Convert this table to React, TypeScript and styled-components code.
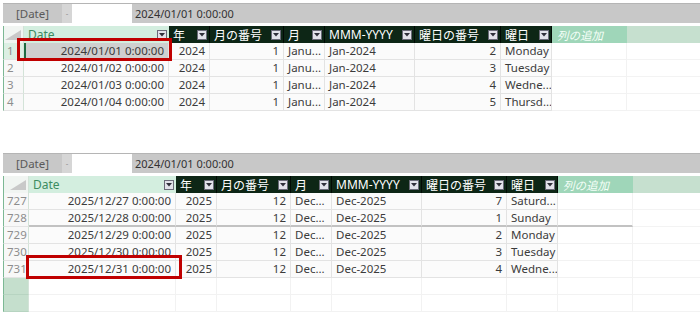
import React from "react";
import styled, { createGlobalStyle, css } from "styled-components";

const Global = createGlobalStyle`
  html, body { margin: 0; padding: 0; background: #ffffff; }
  body { font-family: "Noto Sans", "Noto Sans CJK JP", sans-serif; }
`;

const Page = styled.div`
  width: 700px;
  height: 313px;
  overflow: hidden;
  padding: 3px 0 0 3px;
  box-sizing: border-box;
  display: flex;
  flex-direction: column;
  gap: 42px;
`;

const Panel = styled.div`
  position: relative;
  display: flex;
  flex-direction: column;
  gap: 3px;
`;

const FormulaBar = styled.div`
  display: flex;
  height: 19px;
  border-top: 1px solid #b5b5b5;
  background: #c8c8c8;
  font-size: 11px;
  color: #3a3a3a;
`;

const NameBox = styled.div`
  width: 59px;
  display: flex;
  align-items: center;
  justify-content: center;
  color: #5a5a5a;
  font-size: 11.5px;
`;

const Dash = styled.div`
  width: 10px;
  background: #d6d6d6;
  color: #9a9a9a;
  font-size: 8px;
  display: flex;
  align-items: center;
  justify-content: center;
`;

const InputBox = styled.div`
  width: 60px;
  background: #ffffff;
`;

const FormulaValue = styled.div`
  flex: 1;
  display: flex;
  align-items: center;
  padding-left: 3px;
  font-size: 11px;
  color: #333;
`;

const Table = styled.div`
  display: flex;
  flex-direction: column;
`;

const Row = styled.div<{ $cols: string }>`
  display: grid;
  grid-template-columns: ${(p) => p.$cols};
  height: 17px;
`;

const RowHead = styled.div<{ $active?: boolean; $empty?: boolean }>`
  box-sizing: border-box;
  border-left: 1px solid #7cb894;
  border-right: 1px solid #d3e3d8;
  border-bottom: 1px solid ${(p) => (p.$empty ? "#b7d4c1" : "#e4e4e4")};
  background: ${(p) => (p.$empty ? "#c5dfcd" : p.$active ? "#dcefe3" : "#f8f8f8")};
  color: #8d8d8d;
  font-size: 11.5px;
  line-height: 16px;
  padding-left: 3px;
`;

const Corner = styled.div`
  box-sizing: border-box;
  border-left: 1px solid #7cb894;
  border-right: 1px solid #d3e3d8;
  background: #f1f5f2;
  display: flex;
  align-items: flex-end;
  justify-content: flex-end;
  padding: 0 2px 3px 0;
`;

const HeadCell = styled.div<{ $kind: "light" | "dark" }>`
  box-sizing: border-box;
  display: flex;
  align-items: center;
  justify-content: space-between;
  padding: 0 2px 0 4px;
  font-size: 12px;
  white-space: nowrap;
  overflow: hidden;
  ${(p) =>
    p.$kind === "light"
      ? css`
          background: #d3eedf;
          color: #3d8c5f;
        `
      : css`
          background: #0d2616;
          color: #ffffff;
          border-right: 1px solid #020a05;
        `}
`;

const AddColumn = styled.div`
  background: #9fd6b9;
  color: #f4fff8;
  font-style: italic;
  font-size: 11.5px;
  display: flex;
  align-items: center;
  padding-left: 5px;
`;

const HeadTail = styled.div`
  background: #c6e0cf;
`;

const DropButton = styled.span`
  width: 10px;
  height: 10px;
  box-sizing: border-box;
  flex: none;
  background: #e2e2ea;
  border: 1px solid #6a6a78;
  display: flex;
  align-items: center;
  justify-content: center;
`;

const Cell = styled.div<{ $align?: "left" | "right"; $selected?: boolean; $sep?: boolean; $blank?: boolean }>`
  box-sizing: border-box;
  font-size: 11.5px;
  line-height: 16px;
  color: #3b3b3b;
  white-space: nowrap;
  overflow: hidden;
  text-align: ${(p) => p.$align ?? "left"};
  padding: 0 4px;
  background: ${(p) => (p.$selected ? "#cfcfcf" : p.$blank ? "#ffffff" : "#fbfbfb")};
  border-right: 1px solid ${(p) => (p.$blank ? "#f2f2f2" : "#e3e3e3")};
  border-bottom: ${(p) => (p.$sep ? "2px solid #c2c2c2" : p.$blank ? "1px solid #f2f2f2" : "1px solid #e3e3e3")};
  ${(p) =>
    p.$selected &&
    css`
      border-left: 2px solid #1f6b41;
    `}
`;

const Tail = styled.div`
  border-bottom: 1px solid #f3f3f3;
  background: #ffffff;
`;

const Highlight = styled.div<{ $top: number; $left: number; $w: number; $h: number }>`
  position: absolute;
  top: ${(p) => p.$top}px;
  left: ${(p) => p.$left}px;
  width: ${(p) => p.$w}px;
  height: ${(p) => p.$h}px;
  box-sizing: border-box;
  border: 3px solid #c00000;
  pointer-events: none;
`;

const Drop = () => (
  <DropButton>
    <svg width="6" height="4" viewBox="0 0 6 4">
      <polygon points="0,0 6,0 3,3.5" fill="#2f2f3a" />
    </svg>
  </DropButton>
);

type RowData = {
  n: string;
  date: string;
  y: string;
  m: string;
  mn: string;
  my: string;
  wd: string;
  wn: string;
};

const headers = ["年", "月の番号", "月", "MMM-YYYY", "曜日の番号", "曜日"];

type PanelProps = {
  cols: string;
  rows: RowData[];
  selectedFirst?: boolean;
  sepAfter?: number;
  emptyRows?: number;
  box: { top: number; left: number; w: number; h: number };
};

const GridPanel: React.FC<PanelProps> = ({ cols, rows, selectedFirst, sepAfter, emptyRows = 0, box }) => (
  <Panel>
    <FormulaBar>
      <NameBox>[Date]</NameBox>
      <Dash>-</Dash>
      <InputBox />
      <FormulaValue>2024/01/01 0:00:00</FormulaValue>
    </FormulaBar>
    <Table>
      <Row $cols={cols}>
        <Corner>
          <svg width="16" height="10" viewBox="0 0 16 10">
            <polygon points="16,0 16,10 0,10" fill="#c9c9c9" />
          </svg>
        </Corner>
        <HeadCell $kind="light">
          Date
          <Drop />
        </HeadCell>
        {headers.map((h) => (
          <HeadCell key={h} $kind="dark">
            {h}
            <Drop />
          </HeadCell>
        ))}
        <AddColumn>列の追加</AddColumn>
        <HeadTail />
      </Row>
      {rows.map((r, i) => {
        const sep = sepAfter === i;
        const sel = selectedFirst && i === 0;
        return (
          <Row key={r.n} $cols={cols}>
            <RowHead $active={sel}>{r.n}</RowHead>
            <Cell $align="right" $selected={sel} $sep={sep}>
              {r.date}
            </Cell>
            <Cell $align="right" $sep={sep}>
              {r.y}
            </Cell>
            <Cell $align="right" $sep={sep}>
              {r.m}
            </Cell>
            <Cell $sep={sep}>{r.mn}</Cell>
            <Cell $sep={sep}>{r.my}</Cell>
            <Cell $align="right" $sep={sep}>
              {r.wd}
            </Cell>
            <Cell $sep={sep}>{r.wn}</Cell>
            <Cell $blank $sep={sep} />
            <Tail />
          </Row>
        );
      })}
      {Array.from({ length: emptyRows }).map((_, i) => (
        <Row key={"e" + i} $cols={cols}>
          <RowHead $empty />
          <Cell $blank />
          <Cell $blank />
          <Cell $blank />
          <Cell $blank />
          <Cell $blank />
          <Cell $blank />
          <Cell $blank />
          <Cell $blank />
          <Tail />
        </Row>
      ))}
    </Table>
    <Highlight $top={box.top} $left={box.left} $w={box.w} $h={box.h} />
  </Panel>
);

const topRows: RowData[] = [
  { n: "1", date: "2024/01/01 0:00:00", y: "2024", m: "1", mn: "Janu...", my: "Jan-2024", wd: "2", wn: "Monday" },
  { n: "2", date: "2024/01/02 0:00:00", y: "2024", m: "1", mn: "Janu...", my: "Jan-2024", wd: "3", wn: "Tuesday" },
  { n: "3", date: "2024/01/03 0:00:00", y: "2024", m: "1", mn: "Janu...", my: "Jan-2024", wd: "4", wn: "Wedne..." },
  { n: "4", date: "2024/01/04 0:00:00", y: "2024", m: "1", mn: "Janu...", my: "Jan-2024", wd: "5", wn: "Thursd..." },
];

const bottomRows: RowData[] = [
  { n: "727", date: "2025/12/27 0:00:00", y: "2025", m: "12", mn: "Dec...", my: "Dec-2025", wd: "7", wn: "Saturd..." },
  { n: "728", date: "2025/12/28 0:00:00", y: "2025", m: "12", mn: "Dec...", my: "Dec-2025", wd: "1", wn: "Sunday" },
  { n: "729", date: "2025/12/29 0:00:00", y: "2025", m: "12", mn: "Dec...", my: "Dec-2025", wd: "2", wn: "Monday" },
  { n: "730", date: "2025/12/30 0:00:00", y: "2025", m: "12", mn: "Dec...", my: "Dec-2025", wd: "3", wn: "Tuesday" },
  { n: "731", date: "2025/12/31 0:00:00", y: "2025", m: "12", mn: "Dec...", my: "Dec-2025", wd: "4", wn: "Wedne..." },
];

export default function App() {
  return (
    <>
      <Global />
      <Page>
        <GridPanel
          cols="21px 145px 41px 74px 41px 90px 86px 51px 75px 1fr"
          rows={topRows}
          selectedFirst
          box={{ top: 35, left: 14, w: 155, h: 23 }}
        />
        <GridPanel
          cols="26px 147px 41px 74px 41px 90px 85px 51px 75px 1fr"
          rows={bottomRows}
          sepAfter={1}
          emptyRows={2}
          box={{ top: 102, left: 23, w: 156, h: 24 }}
        />
      </Page>
    </>
  );
}
